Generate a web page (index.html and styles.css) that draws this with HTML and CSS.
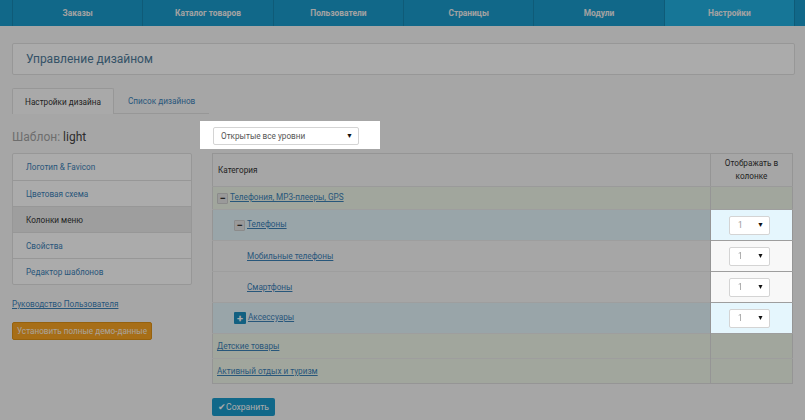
FILE: index.html
```html
<!DOCTYPE html>
<html lang="ru">
<head>
<meta charset="utf-8">
<title>Управление дизайном</title>
<link rel="stylesheet" href="styles.css">
</head>
<body>
<nav class="topnav">
  <div class="nav-inner">
    <a class="nav-item" href="#">Заказы</a>
    <a class="nav-item" href="#">Каталог товаров</a>
    <a class="nav-item" href="#">Пользователи</a>
    <a class="nav-item" href="#">Страницы</a>
    <a class="nav-item" href="#">Модули</a>
    <a class="nav-item active" href="#">Настройки</a>
  </div>
</nav>

<main class="container">
  <div class="page-head">Управление дизайном</div>

  <div class="tabs">
    <a class="tab active" href="#">Настройки дизайна</a>
    <a class="tab" href="#">Список дизайнов</a>
  </div>

  <div class="layout">
    <aside class="side">
      <h2 class="tpl"><span class="tpl-label">Шаблон:</span> light</h2>
      <ul class="side-menu">
        <li><a href="#">Логотип &amp; Favicon</a></li>
        <li><a href="#">Цветовая схема</a></li>
        <li class="current"><a href="#">Колонки меню</a></li>
        <li><a href="#">Свойства</a></li>
        <li><a href="#">Редактор шаблонов</a></li>
      </ul>
      <a class="guide" href="#">Руководство Пользователя</a>
      <button class="btn-demo" type="button">Установить полные демо-данные</button>
    </aside>

    <section class="main">
      <div class="spot spot-levels">
        <div class="select wide"><span>Открытые все уровни</span><span class="caret">▼</span></div>
      </div>

      <table class="cats">
        <thead>
          <tr>
            <th class="c-name">Категория</th>
            <th class="c-col">Отображать в колонке</th>
          </tr>
        </thead>
        <tbody>
          <tr class="r-green r-short">
            <td class="c-name"><span class="tog minus">−</span><a href="#">Телефония, MP3-плееры, GPS</a></td>
            <td class="c-col"></td>
          </tr>
          <tr class="r-blue">
            <td class="c-name lvl1"><span class="tog minus">−</span><a href="#">Телефоны</a></td>
            <td class="c-col spot-cell"><div class="select small"><span>1</span><span class="caret">▼</span></div></td>
          </tr>
          <tr class="r-grey">
            <td class="c-name lvl2"><a href="#">Мобильные телефоны</a></td>
            <td class="c-col spot-cell"><div class="select small"><span>1</span><span class="caret">▼</span></div></td>
          </tr>
          <tr class="r-grey">
            <td class="c-name lvl2"><a href="#">Смартфоны</a></td>
            <td class="c-col spot-cell"><div class="select small"><span>1</span><span class="caret">▼</span></div></td>
          </tr>
          <tr class="r-blue">
            <td class="c-name lvl1"><span class="tog plus">+</span><a href="#">Аксессуары</a></td>
            <td class="c-col spot-cell"><div class="select small"><span>1</span><span class="caret">▼</span></div></td>
          </tr>
          <tr class="r-green r-mid">
            <td class="c-name"><a href="#">Детские товары</a></td>
            <td class="c-col"></td>
          </tr>
          <tr class="r-green r-mid">
            <td class="c-name"><a href="#">Активный отдых и туризм</a></td>
            <td class="c-col"></td>
          </tr>
        </tbody>
      </table>

      <button class="btn-save" type="button">✔Сохранить</button>
    </section>
  </div>
</main>

<div class="overlay"></div>
</body>
</html>
```

FILE: styles.css
```css
* { box-sizing: border-box; }

html, body {
  margin: 0;
  padding: 0;
}

body {
  background: #f8f8f8;
  font-family: Roboto, "Liberation Sans", Arial, sans-serif;
  font-size: 8.2px;
  color: #333;
  min-height: 420px;
}

a { color: #3c82b8; }

/* top navigation */
.topnav {
  background: #1a9bcc;
  height: 26px;
}
.nav-inner {
  margin-left: 12px;
  width: 783px;
  display: flex;
  height: 26px;
  border-left: 1px solid #1788b4;
  border-right: 1px solid #1788b4;
}
.nav-item {
  flex: 1 1 0;
  display: flex;
  align-items: center;
  justify-content: center;
  color: #f2f2f2;
  text-decoration: none;
  font-weight: 700;
  font-size: 8.4px;
  border-left: 1px solid #1788b4;
}
.nav-item:first-child { border-left: none; }
.nav-item.active { background: #22b0e2; }

/* page container */
.container {
  margin-left: 12px;
  width: 783px;
  padding-top: 17px;
}

.page-head {
  height: 32px;
  background: #fff;
  border: 1px solid #e2e2e2;
  border-radius: 2px;
  display: flex;
  align-items: center;
  padding-left: 13px;
  font-size: 12px;
  color: #4f7b9a;
}

.tabs {
  display: flex;
  margin-top: 13px;
  height: 26px;
}
.tab {
  display: flex;
  align-items: center;
  padding: 0 14px;
  white-space: nowrap;
  text-decoration: none;
  color: #3c82b8;
  border-bottom: 1px solid #e2e2e2;
}
.tab.active {
  color: #333;
  background: #fdfdfd;
  border: 1px solid #e2e2e2;
  border-bottom: none;
  border-radius: 2px 2px 0 0;
  width: 102px;
  padding: 0;
  justify-content: center;
}

.layout {
  display: flex;
  gap: 20px;
  margin-top: 7px;
}

/* sidebar */
.side {
  flex: 0 0 180px;
}
.tpl {
  margin: 0;
  height: 32px;
  display: flex;
  align-items: center;
  font-size: 12px;
  font-weight: 400;
  color: #444;
}
.tpl-label { color: #a5a5a5; margin-right: 3px; }

.side-menu {
  list-style: none;
  margin: 0;
  padding: 0;
  border: 1px solid #e2e2e2;
  border-radius: 2px;
  background: #fff;
}
.side-menu li {
  height: 26px;
  display: flex;
  align-items: center;
  padding-left: 13px;
  border-top: 1px solid #e2e2e2;
}
.side-menu li:first-child { border-top: none; }
.side-menu a { text-decoration: none; color: #3c82b8; }
.side-menu li.current { background: #ececec; }
.side-menu li.current a { color: #333; }

.guide {
  display: block;
  margin-top: 14px;
  color: #3c82b8;
}

.btn-demo {
  margin-top: 13px;
  height: 18px;
  width: 140px;
  border: 1px solid #e09216;
  border-radius: 2px;
  background: #f9a423;
  color: #fdf3e3;
  font-family: inherit;
  font-size: 8.2px;
  padding: 0;
}

/* main column */
.main {
  flex: 0 0 581px;
}

.spot {
  position: relative;
  z-index: 20;
  background: #fff;
}
.spot-levels {
  margin-left: -12px;
  width: 180px;
  padding: 6px 21px 4px 13px;
}

.select {
  display: flex;
  align-items: center;
  justify-content: space-between;
  background: #fff;
  border: 1px solid #d4d4d4;
  border-radius: 2px;
  color: #555;
}
.select.wide {
  height: 18px;
  padding: 0 5px 0 7px;
}
.select.small {
  width: 41px;
  height: 19px;
  padding: 0 5px 0 8px;
  color: #999;
  margin-left: 18px;
}
.caret { font-size: 7px; color: #111; }

.cats {
  margin-top: 4px;
  width: 581px;
  border-collapse: collapse;
  background: #f8f8f8;
  border: 1px solid #dedede;
}
.cats th {
  height: 33px;
  font-weight: 400;
  color: #333;
  line-height: 13px;
  border-bottom: 1px solid #e6e6e6;
}
.cats th.c-name {
  text-align: left;
  padding-left: 5px;
}
.cats .c-col {
  width: 82px;
  border-left: 1px solid #dedede;
  text-align: center;
  padding: 0 8px;
}
.cats td {
  padding: 0;
  border-top: 1px solid #ececec;
}
.cats td.c-name { padding-left: 4px; }
.cats td.c-col { padding: 0; text-align: left; }
.cats td.lvl1 { padding-left: 21px; }
.cats td.lvl2 { padding-left: 34px; }
.cats td a { color: #3c82b8; }

.r-short td { height: 23px; }
.r-blue td, .r-grey td { height: 31px; }
.r-mid td { height: 25px; }

.r-green td { background: #f0f8ea; }
.r-blue td { background: #e5f6fd; }
.r-grey td { background: #f8f8f8; }

.spot-cell {
  position: relative;
  z-index: 20;
}

.tog {
  display: inline-flex;
  align-items: center;
  justify-content: center;
  width: 11px;
  height: 11px;
  margin-right: 2px;
  vertical-align: -2px;
  font-size: 11px;
  line-height: 1;
  font-weight: 700;
  border-radius: 1px;
}
.tog.minus {
  background: #e6e6e6;
  border: 1px solid #cfcfcf;
  color: #333;
}
.tog.plus {
  background: #1b8fc0;
  color: #fff;
  width: 12px;
  height: 12px;
}

.btn-save {
  margin-top: 14px;
  height: 18px;
  width: 63px;
  border: none;
  border-radius: 2px;
  background: #1a9bcc;
  color: #fff;
  font-family: inherit;
  font-size: 8.6px;
  padding: 0;
}

/* dimming overlay */
.overlay {
  position: fixed;
  inset: 0;
  background: rgba(0, 0, 0, 0.33);
  z-index: 10;
}
```
